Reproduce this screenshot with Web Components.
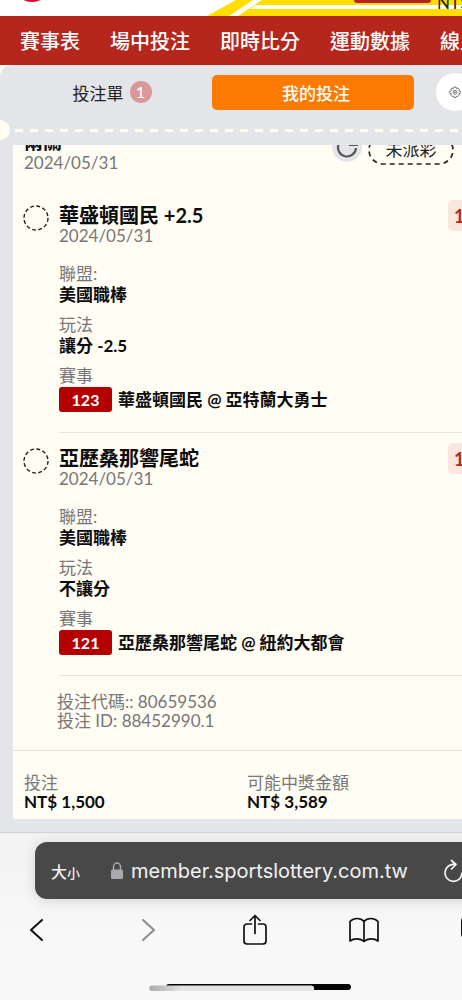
<!DOCTYPE html>
<html lang="zh-Hant">
<head>
<meta charset="utf-8">
<meta name="viewport" content="width=device-width, initial-scale=1">
<title>我的投注</title>
<style>
  html { background: #f8f8f8; }
  body { margin: 0; overflow-x: hidden; font-family: Lato, "Noto Sans CJK TC", sans-serif; font-size: 17px; color: #0c0c0c; }
</style>
</head>
<body>
<bet-app></bet-app>
<script>
const define = (name, html) => customElements.define(name, class extends HTMLElement {
  constructor() {
    super();
    const t = document.createElement('template');
    t.innerHTML = html;
    this.attachShadow({ mode: 'open' }).append(t.content.cloneNode(true));
  }
});

define('site-banner', `
<style>
  :host { display: flex; justify-content: flex-end; position: relative; height: 16px; background: #fff; overflow: hidden; }
  .stripes { position: absolute; inset: 0; }
  .login { position: relative; width: 77px; height: 3px; border-radius: 0 0 4px 4px; background: #b5261c; margin-right: 6px; }
  .balance { position: relative; width: 25px; margin-top: -7px; font: 17px/20px Lato, sans-serif; color: #222; white-space: nowrap; }
</style>
<svg class="stripes" width="900" height="16" viewBox="0 0 900 16" aria-hidden="true">
  <ellipse cx="32" cy="-6" rx="13" ry="8" fill="#e60020"/>
  <path d="M207 16 236 0H900V16Z" fill="#ffde00"/>
  <path d="M229 16 253 0H262L238 16Z" fill="#fff"/>
  <path d="M256 5H900V9H250Z" fill="#fff"/>
</svg>
<div class="login"></div>
<div class="balance">NT$</div>`);

define('main-nav', `
<style>
  :host { display: block; height: 49px; background: #b5261c; overflow: hidden; }
  nav { display: flex; align-items: center; gap: 30px; height: 49px; padding-left: 20px; }
  a { flex: none; color: #fff; font-size: 20px; font-weight: 500; line-height: 28px; text-decoration: none; }
</style>
<nav><a href="#schedule">賽事表</a><a href="#live">場中投注</a><a href="#scores">即時比分</a><a href="#stats">運動數據</a><a href="#online">線上</a></nav>`);

define('slip-tabs', `
<style>
  :host { display: block; background: #fffdf4; overflow: hidden; }
  .bar { display: flex; align-items: center; height: 54px; background: #e4e5e8; border-radius: 12px 0 0 0; }
  button { border: 0; padding: 0; font-family: inherit; font-size: 17px; }
  .slip { flex: 1; display: flex; align-items: center; justify-content: center; gap: 6px; height: 34px; padding-left: 12px; background: none; color: #222; }
  .count { width: 22px; height: 22px; border-radius: 50%; background: #d8989a; color: #fff; font-size: 16px; line-height: 22px; }
  .mine { flex: none; width: 202px; height: 35px; padding-left: 6px; border-radius: 5px; background: #ff7a00; color: #fff; font-weight: 500; }
  .gear { flex: none; display: flex; align-items: center; justify-content: center; width: 38px; height: 38px; margin: 0 -12px 0 22px; border-radius: 50%; background: #fff; }
  .perf { display: flex; align-items: center; gap: 5px; height: 22px; padding-bottom: 4px; background: #e4e5e8; }
  .hole { flex: none; width: 20px; height: 20px; margin-left: -10px; border-radius: 50%; background: #fffdf4; }
  .dash { flex: 1; height: 3px; background: repeating-linear-gradient(90deg, #fffdf4 0 8px, transparent 8px 15px); }
</style>
<div class="bar">
  <button class="slip">投注單<span class="count">1</span></button>
  <button class="mine">我的投注</button>
  <button class="gear" aria-label="設定"><svg width="12" height="12" viewBox="0 0 24 24" fill="none" stroke="#777" stroke-width="2"><path d="M10 2h4l1 3 3-1 2.500 2.500-1 3 3 1v4l-3 1 1 3-2.500 2.500-3-1-1 3h-4l-1-3-3 1L3.500 18.500l1-3-3-1v-4l3-1-1-3L6 4l3 1Z"/><circle cx="12" cy="12.500" r="4"/><circle cx="12" cy="12.500" r="1"/></svg></button>
</div>
<div class="perf"><span class="hole"></span><span class="dash"></span></div>`);

define('dashed-ring', `
<style>:host { display: block; width: 26px; height: 26px; } svg { display: block; }</style>
<svg width="26" height="26" viewBox="0 0 26 26" aria-hidden="true"><circle cx="13" cy="13" r="12" fill="none" stroke="#222" stroke-width="1.400" stroke-dasharray="3.800 2.483"/></svg>`);

define('bet-leg', `
<style>
  :host { display: grid; grid-template-columns: 34px 1fr; column-gap: 2px; padding: 14px 0 0 10px; }
  dashed-ring { margin-top: 1px; }
  .body { border-bottom: 1px solid #e6e4de; padding-bottom: 20px; }
  .top { display: flex; justify-content: space-between; height: 42px; }
  h3 { margin: 0; font-size: 20px; font-weight: 700; line-height: 22px; }
  .date { color: #777; line-height: 20px; }
  .odds { width: 48px; height: 31px; margin: -4px 0 0; padding-left: 6px; box-sizing: border-box; border-radius: 5px; background: #f8e6df; color: #b5261c; font-size: 18px; font-weight: 700; line-height: 32px; }
  dl { display: grid; gap: 9px; margin: 17px 0 0; line-height: 21px; }
  dt { color: #777; }
  dd { margin: 0; font-weight: 700; }
  .match { display: flex; align-items: center; gap: 6px; height: 25px; margin-top: 1px; }
  .no { width: 53px; height: 25px; border-radius: 3px; background: #b50000; color: #fff; text-align: center; font-size: 16px; line-height: 25px; }
</style>
<dashed-ring></dashed-ring>
<div class="body">
  <div class="top"><div><h3><slot name="pick"></slot></h3><div class="date">2024/05/31</div></div><div class="odds">1</div></div>
  <dl>
    <div><dt>聯盟:</dt><dd>美國職棒</dd></div>
    <div><dt>玩法</dt><dd><slot name="market"></slot></dd></div>
    <div><dt>賽事</dt><dd class="match"><span class="no"><slot name="no"></slot></span><span><slot name="match"></slot></span></dd></div>
  </dl>
</div>`);

define('bet-card', `
<style>
  :host { display: block; background: #e4e5e8; overflow: hidden; padding: 0 0 13px 13px; border-bottom: 1px solid #cfd0d3; }
  .view { overflow: hidden; margin-right: -34px; background: #fffdf4; border-radius: 0 0 0 3px; }
  .head { display: flex; margin-top: -15px; padding: 0 42px 18px 11px; }
  .name { flex: 1; height: 42px; }
  h2 { margin: 0; font-size: 19px; font-weight: 700; line-height: 24px; }
  .grey { color: #777; }
  .name .grey { line-height: 18px; }
  .reload { flex: none; display: flex; align-items: center; justify-content: center; width: 30px; height: 30px; margin: 2px 6px 0 0; padding: 0; border: 0; border-radius: 50%; background: #e4e5e8; }
  .state { position: relative; display: flex; justify-content: center; width: 86px; height: 30px; margin-top: 5px; line-height: 30px; color: #222; }
  .state svg { position: absolute; inset: 0; }
  .codes { padding: 16px 0 20px 44px; border-bottom: 1px solid #e6e4de; color: #777; line-height: 19px; }
  dl { display: grid; grid-template-columns: 1fr 1fr; margin: 0; padding: 22px 26px 8px 11px; line-height: 19px; }
  dd { margin: 0; font-weight: 700; }
</style>
<div class="view">
  <div class="head">
    <div class="name"><h2>兩關</h2><div class="grey">2024/05/31</div></div>
    <button class="reload" aria-label="重新整理"><svg width="22" height="22" viewBox="0 0 22 22" fill="none" stroke="#555" stroke-width="2.200"><path d="M16 4A9 9 0 1 0 20 12"/><path d="M13 9H21V2" stroke-width="2"/></svg></button>
    <div class="state"><svg width="86" height="30" aria-hidden="true"><rect x="1" y="1" width="84" height="28" rx="14" fill="none" stroke="#222" stroke-width="1.700" stroke-dasharray="5 4"/></svg>未派彩</div>
  </div>
  <slot></slot>
  <div class="codes"><div>投注代碼:: 80659536</div><div>投注 ID: 88452990.1</div></div>
  <dl><div><dt class="grey">投注</dt><dd>NT$ 1,500</dd></div><div><dt class="grey">可能中獎金額</dt><dd>NT$ 3,589</dd></div></dl>
</div>`);

define('browser-bar', `
<style>
  :host { display: block; overflow: hidden; background: linear-gradient(#f2f2f2, #f8f8f8 60%); }
  .wide { margin-right: -38px; padding-bottom: 9px; }
  .address { display: flex; align-items: center; height: 57px; margin: 9px 0 0 35px; padding: 0 35px 0 16px; border-radius: 12px; background: #484848; color: #f2f2f2; box-shadow: 0 2px 14px #0002; }
  .size { font-size: 16px; font-weight: 500; } .size small { font-size: 13px; }
  .lock { margin-left: 31px; }
  .url { flex: 1; margin-left: 8px; font: 20px/28px Inter, sans-serif; }
  button { display: block; padding: 0; border: 0; background: none; color: inherit; font-family: inherit; }
  .tools { display: grid; grid-template-columns: repeat(5, 1fr); justify-items: center; align-items: center; height: 36px; margin: 13px -28px 0 -18px; }
  svg { display: block; fill: none; stroke: #111; stroke-width: 2; stroke-linecap: round; stroke-linejoin: round; }
  .home { margin: 36px auto 0; }
</style>
<div class="wide">
<div class="address">
  <button class="size">大<small>小</small></button>
  <svg class="lock" width="12" height="18" viewBox="0 0 12 18" aria-hidden="true"><path d="M2.500 8V5a3.500 4 0 0 1 7 0V8" stroke="#a9a8b0" stroke-width="1.500"/><rect y="7.500" width="12" height="9.500" rx="1.500" fill="#a9a8b0" stroke="none"/></svg>
  <span class="url">member.sportslottery.com.tw</span>
  <button aria-label="重新載入"><svg width="22" height="24" viewBox="0 0 22 24" style="stroke:#f2f2f2;stroke-width:1.700"><path d="M12 5.500A8.500 8.500 0 1 0 19 14M8.500 1.500 13 5.500 8.500 10"/></svg></button>
</div>
<div class="tools">
  <button aria-label="上一頁"><svg width="20" height="24" viewBox="0 0 20 24"><path d="M15 2 4 12 15 22"/></svg></button>
  <button aria-label="下一頁"><svg width="20" height="24" viewBox="0 0 20 24" style="stroke:#8b8b8b"><path d="M7 2 18 12 7 22"/></svg></button>
  <button aria-label="分享"><svg width="24" height="32" viewBox="0 0 24 32" style="stroke-width:1.700"><path d="M8.500 10H4a3 3 0 0 0-3 3V27a3 3 0 0 0 3 3H20a3 3 0 0 0 3-3V13a3 3 0 0 0-3-3H15.500M12 19.500V2M7 6.500 12 1.500 17 6.500"/></svg></button>
  <button aria-label="書籤"><svg width="30" height="26" viewBox="0 0 30 26" style="stroke-width:1.700"><path d="M15 4.500C11.500.500 5 .500 1 4.500V24C5 21 11.500 21 15 24.500 18.500 21 25 21 29 24V4.500C25 .500 18.500.500 15 4.500ZM15 4.500V24"/></svg></button>
  <button aria-label="分頁"><svg width="24" height="28" viewBox="0 0 24 28"><rect x="1" y="2" width="17" height="19" rx="3"/><path d="M22 8V22a3 3 0 0 1-3 3H7"/></svg></button>
</div>
<svg class="home" width="202" height="7" viewBox="0 0 202 7" aria-hidden="true">
  <defs><linearGradient id="g"><stop stop-color="#aaa"/><stop offset=".2" stop-color="#e4e4e4"/></linearGradient></defs>
  <rect x="17" width="185" height="6" rx="3" fill="#050505" stroke="none"/><path d="M3 1.500H162q3 0 3 2.500V7H3a2.700 2.700 0 0 1 0-5.500Z" fill="url(#g)" stroke="none"/>
</svg>
</div>`);

define('bet-app', `
<style>:host { display: block; overflow: hidden; }</style>
<site-banner></site-banner>
<main-nav></main-nav>
<slip-tabs></slip-tabs>
<bet-card>
  <bet-leg><span slot="pick">華盛頓國民 +2.5</span><span slot="market">讓分 -2.5</span><span slot="no">123</span><span slot="match">華盛頓國民 @ 亞特蘭大勇士</span></bet-leg>
  <bet-leg><span slot="pick">亞歷桑那響尾蛇</span><span slot="market">不讓分</span><span slot="no">121</span><span slot="match">亞歷桑那響尾蛇 @ 紐約大都會</span></bet-leg>
</bet-card>
<browser-bar></browser-bar>`);
</script>
</body>
</html>
